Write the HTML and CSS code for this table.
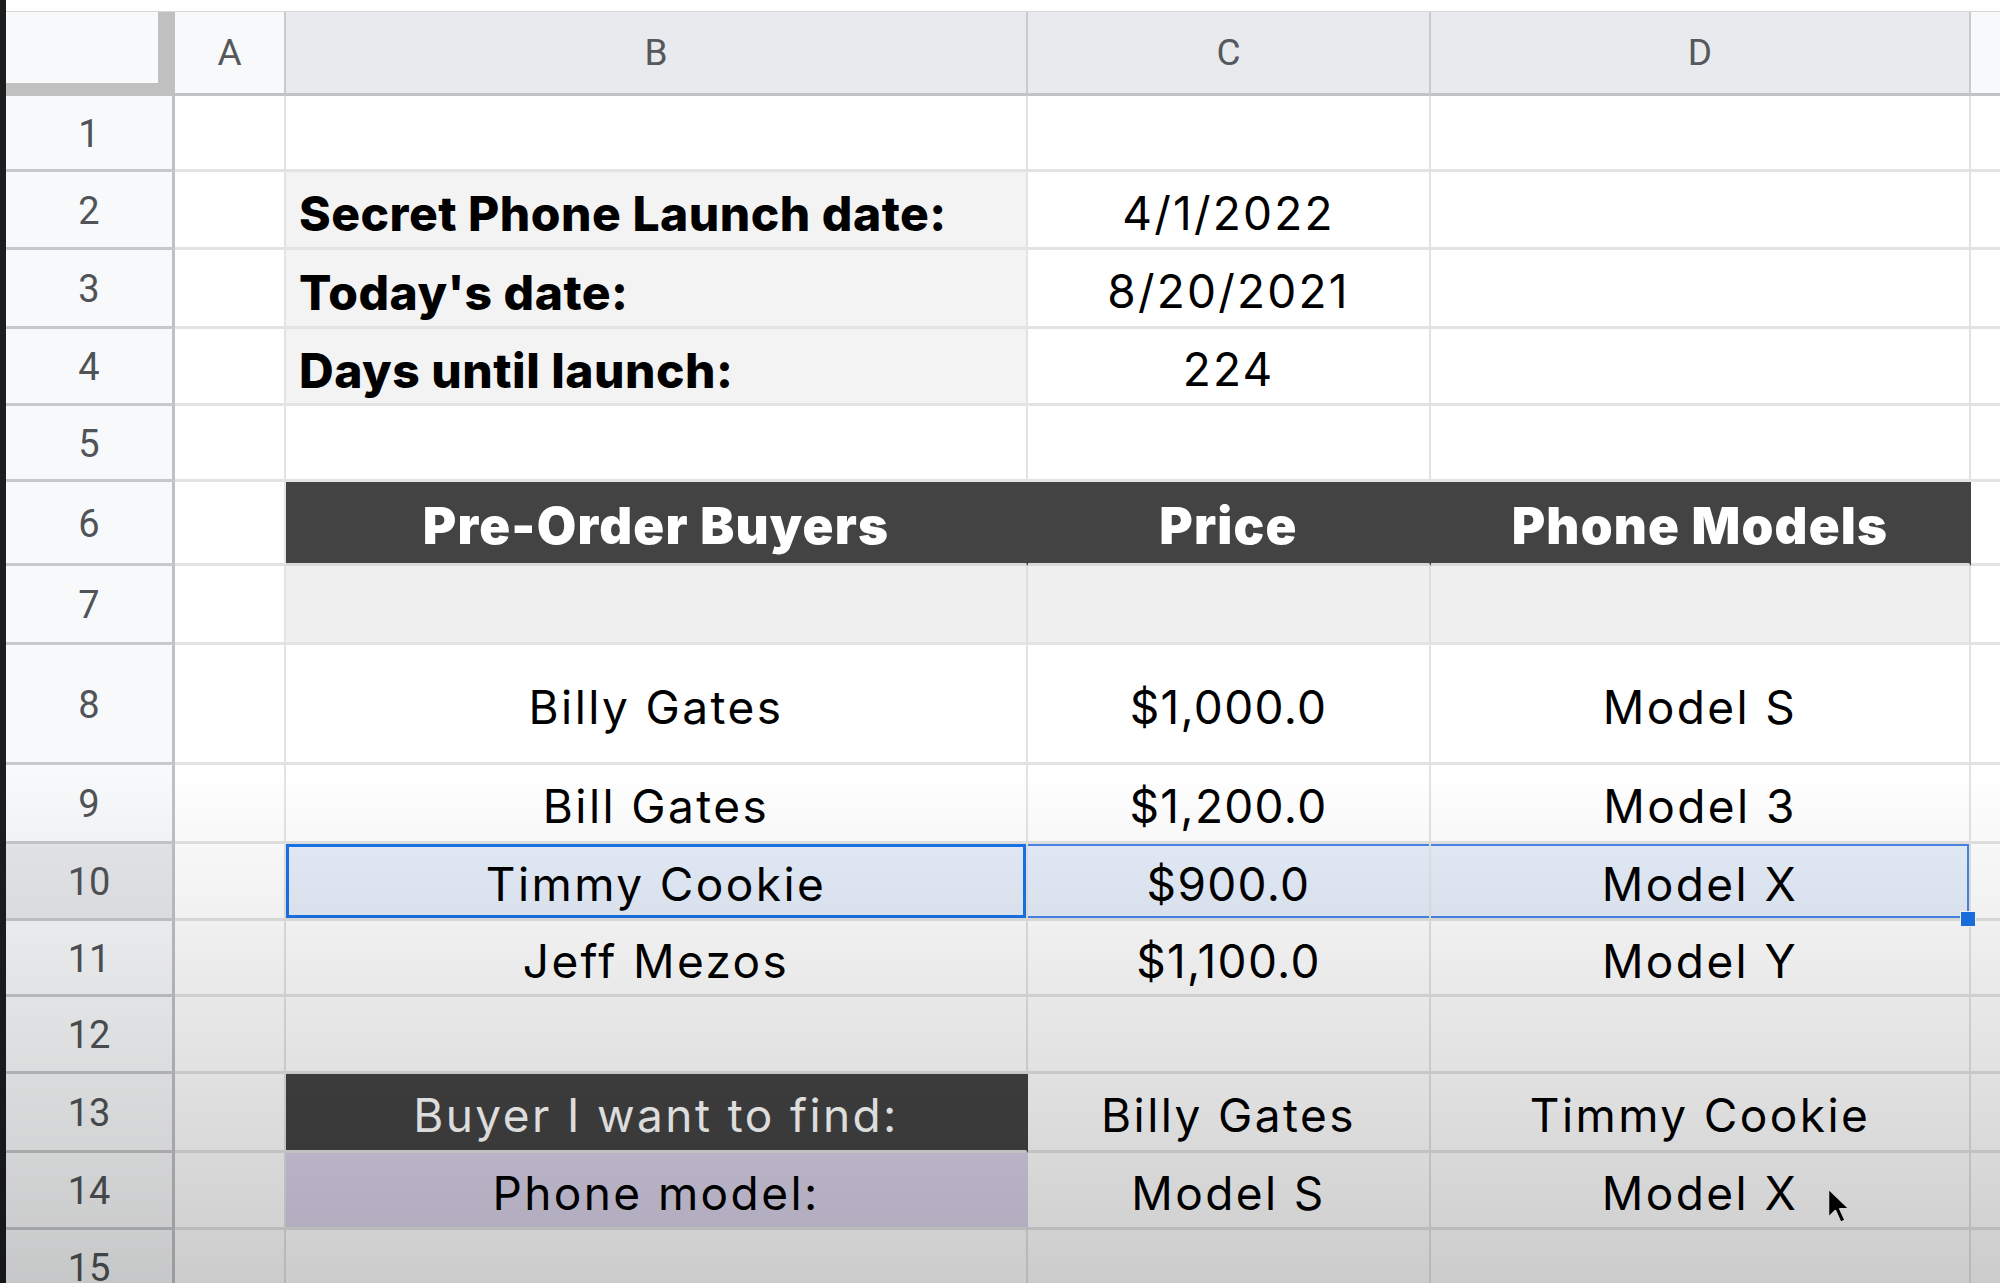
FILE: index.html
```html
<!DOCTYPE html>
<html>
<head>
<meta charset="utf-8">
<link rel="stylesheet" href="styles.css">
</head>
<body>
<div class="app">
  <div class="edge"></div>
  <div class="main">
    <div class="topbar"></div>
    <div class="sheet">
      <div class="corner"></div>
      <div class="ch">A</div>
      <div class="ch hl">B</div>
      <div class="ch hl">C</div>
      <div class="ch hl">D</div>
      <div class="ch last"></div>

      <div class="rh">1</div>
      <div class="c"></div><div class="c"></div><div class="c"></div><div class="c"></div><div class="c last"></div>

      <div class="rh">2</div>
      <div class="c"></div><div class="c lbl">Secret Phone Launch date:</div><div class="c val">4/1/2022</div><div class="c"></div><div class="c last"></div>

      <div class="rh">3</div>
      <div class="c"></div><div class="c lbl">Today's date:</div><div class="c val">8/20/2021</div><div class="c"></div><div class="c last"></div>

      <div class="rh">4</div>
      <div class="c"></div><div class="c lbl">Days until launch:</div><div class="c val">224</div><div class="c"></div><div class="c last"></div>

      <div class="rh">5</div>
      <div class="c"></div><div class="c"></div><div class="c"></div><div class="c"></div><div class="c last"></div>

      <div class="rh">6</div>
      <div class="c"></div><div class="c head">Pre-Order Buyers</div><div class="c head">Price</div><div class="c head">Phone Models</div><div class="c last"></div>

      <div class="rh">7</div>
      <div class="c"></div><div class="c grey"></div><div class="c grey"></div><div class="c grey"></div><div class="c last"></div>

      <div class="rh">8</div>
      <div class="c"></div><div class="c txt">Billy Gates</div><div class="c txt num">$1,000.0</div><div class="c txt">Model S</div><div class="c last"></div>

      <div class="rh">9</div>
      <div class="c"></div><div class="c txt">Bill Gates</div><div class="c txt num">$1,200.0</div><div class="c txt">Model 3</div><div class="c last"></div>

      <div class="rh hl">10</div>
      <div class="c"></div><div class="c txt sel active">Timmy Cookie</div><div class="c txt num sel range">$900.0</div><div class="c txt sel range end">Model X<span class="handle"></span></div><div class="c last"></div>

      <div class="rh">11</div>
      <div class="c"></div><div class="c txt">Jeff Mezos</div><div class="c txt num">$1,100.0</div><div class="c txt">Model Y</div><div class="c last"></div>

      <div class="rh">12</div>
      <div class="c"></div><div class="c"></div><div class="c"></div><div class="c"></div><div class="c last"></div>

      <div class="rh">13</div>
      <div class="c"></div><div class="c txt dark">Buyer I want to find:</div><div class="c txt">Billy Gates</div><div class="c txt">Timmy Cookie</div><div class="c last"></div>

      <div class="rh">14</div>
      <div class="c"></div><div class="c txt purple">Phone model:</div><div class="c txt">Model S</div><div class="c txt">Model X</div><div class="c last"></div>

      <div class="rh">15</div>
      <div class="c"></div><div class="c"></div><div class="c"></div><div class="c"></div><div class="c last"></div>
    </div>
  </div>
</div>
<svg class="cursor" width="28" height="40" viewBox="0 0 24 34">
  <path d="M2 2 L2 27 L8 21 L12.5 31 L16.5 29.2 L12 19.5 L20 19.5 Z" fill="#000" stroke="#fff" stroke-width="1.6" stroke-linejoin="round"/>
</svg>
<div class="vignette"></div>
</body>
</html>
```

FILE: styles.css
```css
html, body {
  margin: 0;
  padding: 0;
  background: #ffffff;
  width: 2000px;
  height: 1283px;
  overflow: hidden;
}

.app {
  display: flex;
  width: 2000px;
  height: 1283px;
}

.edge {
  width: 6px;
  flex: none;
  background: #1c1d1f;
}

.main {
  flex: 1;
  display: flex;
  flex-direction: column;
}

.topbar {
  height: 11px;
  flex: none;
  background: #ffffff;
  border-bottom: 1px solid #d6d6d6;
}

.sheet {
  display: grid;
  grid-template-columns: 169px 111px 742px 403px 540px 1fr;
  grid-template-rows: 84px 76px 78px 79px 77px 76px 84px 79px 120px 79px 77px 76px 77px 79px 77px 77px;
}

.sheet > div {
  box-sizing: border-box;
  display: flex;
  align-items: center;
  justify-content: center;
  min-width: 0;
  white-space: nowrap;
}

.corner {
  background: #f8f9fa;
  border-right: 17px solid #c0c0c0;
  border-bottom: 13px solid #c0c0c0;
}

.ch {
  background: #f8f9fa;
  border-right: 2px solid #c8cacc;
  border-bottom: 3px solid #c0c2c4;
  font-family: Roboto, "Liberation Sans", sans-serif;
  font-size: 37px;
  color: #55585c;
}

.ch.hl {
  background: #e8eaed;
}

.ch.last {
  border-right: none;
}

.rh {
  background: #f8f9fa;
  border-right: 3px solid #bfc1c3;
  border-bottom: 3px solid #c6c8ca;
  font-family: Roboto, "Liberation Sans", sans-serif;
  font-size: 38px;
  color: #505357;
  padding-top: 2px;
}

.rh.hl {
  background: #e6e8eb;
}

.c {
  background: #ffffff;
  border-right: 2px solid #e3e3e3;
  border-bottom: 3px solid #e3e3e3;
  font-family: Inter, "Open Sans", sans-serif;
  color: #000;
}

.c.last {
  border-right: none;
}

.lbl {
  background: #f3f3f3;
  justify-content: flex-start !important;
  padding-left: 13px;
  padding-top: 8px;
  font-weight: 800;
  font-size: 48px;
  letter-spacing: 0.5px;
}

.val {
  font-size: 46px;
  letter-spacing: 2.2px;
  padding-top: 6px;
}

.head {
  background: #434343;
  border-right-color: #434343;
  border-bottom-color: #d9d9d9;
  color: #ffffff;
  font-weight: 900;
  font-size: 51px;
  letter-spacing: 1.2px;
  padding-top: 6px;
}

.grey {
  background: #efefef;
  border-right-color: #dedede;
}

.txt {
  font-size: 46px;
  letter-spacing: 2.4px;
  padding-top: 6px;
}

.txt.num {
  letter-spacing: 1.3px;
}

.dark {
  background: #434343;
  border-right-color: #434343;
  color: #ffffff;
}

.purple {
  background: #d9d2e9;
  border-right-color: #d9d2e9;
}

.sel {
  background: #e6eefb;
  position: relative;
}

.active {
  box-shadow: inset 0 0 0 3px #1a73e8;
}

.range {
  box-shadow: inset 0 2px 0 #4a86e8, inset 0 -2px 0 #4a86e8;
}

.range.end {
  box-shadow: inset 0 2px 0 #4a86e8, inset 0 -2px 0 #4a86e8, inset -2px 0 0 #4a86e8;
}

.handle {
  position: absolute;
  right: -7px;
  bottom: -9px;
  width: 16px;
  height: 16px;
  background: #1a73e8;
  border: 1px solid #ffffff;
  box-sizing: border-box;
  z-index: 2;
}

.cursor {
  position: absolute;
  left: 1826px;
  top: 1186px;
  z-index: 5;
}

.vignette {
  position: absolute;
  left: 0;
  top: 0;
  width: 2000px;
  height: 1283px;
  pointer-events: none;
  z-index: 10;
  background: linear-gradient(to bottom, rgba(0,0,0,0) 0%, rgba(0,0,0,0) 60%, rgba(0,0,0,0.2) 100%);
}
```
